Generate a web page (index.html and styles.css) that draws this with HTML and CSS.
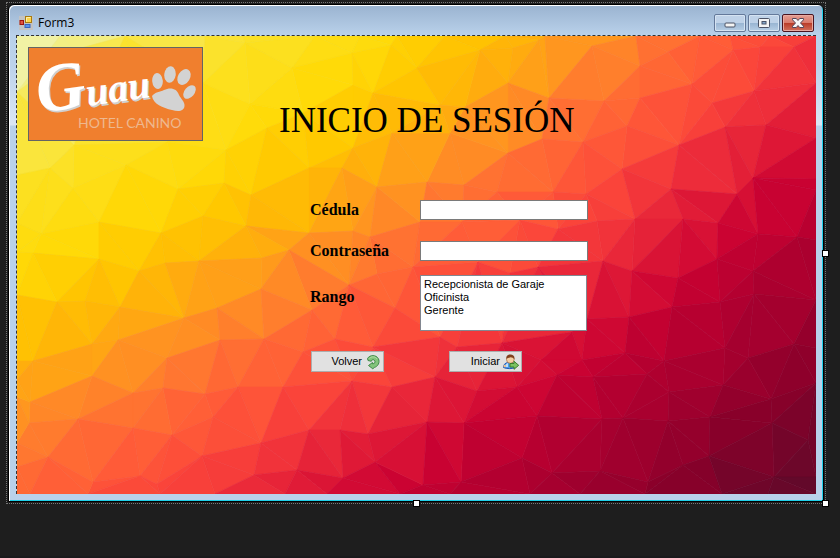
FILE: index.html
```html
<!DOCTYPE html>
<html lang="es">
<head>
<meta charset="utf-8">
<title>Form3</title>
<link rel="stylesheet" href="styles.css">
</head>
<body>
<div class="designer">
  <main class="window">
    <header class="titlebar">
      <svg class="form-icon" viewBox="0 0 14 14" aria-hidden="true">
        <rect width="14" height="14" fill="#c3c3c3"/>
        <rect x="6.5" y=".5" width="6" height="6" fill="#ffd54a" stroke="#a87b10"/>
        <path d="M7.500 5.500V1.500h4" fill="none" stroke="#fff0a8"/>
        <rect x="1" y="4.500" width="3.500" height="4" fill="#e2543e" stroke="#9c1410"/>
        <rect x="6" y="8.500" width="5" height="3" fill="#5c94ee" stroke="#3565c0"/>
      </svg>
      <h2 class="caption">Form3</h2>
      <div class="window-buttons">
        <button class="wbtn" type="button" aria-label="Minimizar"><svg viewBox="0 0 12 10"><rect x="1" y="5" width="10" height="4" rx="1" fill="#f4f4f4" stroke="#4b5265"/></svg></button>
        <button class="wbtn" type="button" aria-label="Maximizar"><svg viewBox="0 0 12 10"><rect x=".5" y=".5" width="11" height="9" rx="1" fill="#f4f4f4" stroke="#4b5265"/><rect x="4" y="3.500" width="4" height="2.500" fill="#83a7cc" stroke="#4b5265"/></svg></button>
        <button class="wbtn wbtn-close" type="button" aria-label="Cerrar"><svg viewBox="0 0 12 10"><path d="M.5.5h3.800L6 2.500 7.700.5h3.800v1.300L8.500 5l3 3.200v1.300H7.700L6 7.500 4.300 9.500H.5V8.200l3-3.200-3-3.200z" fill="#f6f6f6" stroke="#55475a"/></svg></button>
      </div>
    </header>
    <section class="client">
      <svg class="backdrop" viewBox="17 36 799 458" preserveAspectRatio="none" aria-hidden="true"></svg>
      <div class="top">
        <div class="logo">
          <div class="brand"><span class="brand-initial">G</span>uau</div>
          <div class="tagline">HOTEL CANINO</div>
          <svg class="paw" viewBox="0 0 44 46" aria-hidden="true">
            <g fill="#d3d3d3">
              <ellipse cx="5.500" cy="15" rx="5.300" ry="8" transform="rotate(-5 5.500 15)"/>
              <ellipse cx="18" cy="8.500" rx="5.700" ry="8.300" transform="rotate(7 18 8.500)"/>
              <ellipse cx="32" cy="11" rx="6" ry="8.500" transform="rotate(30 32 11)"/>
              <ellipse cx="37.500" cy="26" rx="5" ry="7.700" transform="rotate(40 37.500 26)"/>
              <path d="M0 30C3 26 8 26 12 24 18 21 25 22 27 29 29 33 33 36 32.500 40 32 45 27 46 20 44 11 42 1 38 0 30z"/>
            </g>
          </svg>
        </div>
        <h1 class="title">INICIO DE SESIÓN</h1>
      </div>
      <form class="login">
        <label for="cedula">Cédula</label>
        <input id="cedula" type="text">
        <label for="clave">Contraseña</label>
        <input id="clave" type="password">
        <label class="list-label" for="rango">Rango</label>
        <select id="rango" size="4">
          <option>Recepcionista de Garaje</option>
          <option>Oficinista</option>
          <option>Gerente</option>
        </select>
        <div class="actions">
          <button class="action" type="button">Volver
            <svg viewBox="0 0 16 16" aria-hidden="true"><path d="M2.500 4.500C5 .5 11 .8 13.300 4.500c2 4-.5 8-4 9l-1.500 1.300-4.300-3.300L7.500 8.500v1.300c2.200 0 3-1.600 2.300-3C8.800 5 6.500 5.500 6.300 7.300L3 6.500z" fill="#83c47b" stroke="#42894a"/><path d="M4.500 4.500c2-2.500 6-2 7.500.5" fill="none" stroke="#b5e0a8"/></svg>
          </button>
          <button class="action" type="button">Iniciar
            <svg viewBox="0 0 16 16" aria-hidden="true"><path d="M.5 13.500c0-3 1.500-4.500 4.500-5h4c2.500 1 3.500 2 3.500 5-3 1.500-9 1.500-12 0z" fill="#4b9be8" stroke="#2459b5"/><path d="M3 10l2-1v4H3z" fill="#b8e0ff"/><circle cx="7.300" cy="5.500" r="3.800" fill="#f4cfa4" stroke="#a0693c" stroke-width=".7"/><path d="M3.300 5C3 1.500 5 .5 7.500.5S12 2 11.400 5.500C10.500 3.500 9 4 7.500 3.300 6 4 4.500 3.500 3.300 5z" fill="#80401c"/><circle cx="1.800" cy="12" r="1.300" fill="#f0c090"/><path d="M7 9.500h4V7.300l4.700 4-4.700 4V13H7z" fill="#7ac261" stroke="#3c7d2c"/></svg>
          </button>
        </div>
      </form>
    </section>
  </main>
  <i class="handle handle-right"></i>
  <i class="handle handle-bottom"></i>
  <i class="handle handle-corner"></i>
</div>
<script src="backdrop.js"></script>
</body>
</html>
```
FILE: styles.css
```css
* { box-sizing: border-box; }

body {
  margin: 0;
  min-height: 100vh;
  padding: 2px 14px 0 6px;
  background: #1e1e1e;
  border-bottom: 2px solid #1a1a1c;
  color: #000;
  font: 11px/13px "Liberation Sans", sans-serif;
}

.designer {
  position: relative;
  border: 1px dotted #777;
  padding: 1px;
}

.window {
  border: 1px solid #000;
  border-radius: 6px 6px 0 0;
  box-shadow: inset 1px 1px #fff, inset -1px -1px #20cfe8;
  padding: 1px 7px 7px;
  background: linear-gradient(#9ab3d0, #b9d1ea 30px, #bcd2eb 60px, #dbe6f4 120px, #b9d1ea 121px);
}

.titlebar {
  display: flex;
  align-items: center;
  height: 29px;
  padding: 5px 2px 0 3px;
}

.form-icon { width: 14px; height: 14px; }

.caption {
  flex: 1;
  margin: 0 0 0 5px;
  font: 12px/16px "Open Sans", sans-serif;
}

.window-buttons { display: flex; gap: 2px; }

.wbtn {
  display: grid;
  place-items: center;
  width: 32px;
  height: 18px;
  padding: 0;
  border: 1px solid #64799a;
  border-radius: 2px;
  box-shadow: inset 0 0 0 1px #d5e3f2;
  background: linear-gradient(#bfd2e8 50%, #98b4d2 50%, #b7cfe6);
}

.wbtn svg { width: 12px; height: 10px; }

.wbtn-close {
  border-color: #4a1420;
  box-shadow: inset 0 0 0 1px #e9aaa0;
  background: linear-gradient(#e59d92, #d9796a 50%, #b93a26 50%, #d2705c);
}

.client {
  position: relative;
  isolation: isolate;
  border: 1px dashed #333;
  border-width: 1px 0 0 1px;
  padding: 11px 11px 122px;
}

.backdrop {
  position: absolute;
  inset: 0;
  z-index: -1;
  width: 100%;
  height: 100%;
}

.top { display: flex; align-items: flex-end; gap: 76px; }

.logo {
  position: relative;
  width: 175px;
  height: 94px;
  border: 1px solid #646464;
  background: #f07f2e;
}

.brand {
  position: absolute;
  left: 7px;
  top: 0;
  color: #fff;
  font: italic bold 40px/68px "Liberation Serif", serif;
  text-shadow: 1px 2px #d0d0d0;
  transform: rotate(-8deg);
}

.brand-initial { font-size: 68px; }

.tagline {
  position: absolute;
  left: 49px;
  bottom: 9px;
  color: #eeb88f;
  font: 14px/16px Lato, sans-serif;
}

.paw {
  position: absolute;
  left: 123px;
  top: 18px;
  width: 44px;
  height: 46px;
}

.title {
  margin: 0;
  font: 35px/40px "Liberation Serif", serif;
}

.login {
  display: grid;
  grid-template-columns: 110px 168px;
  grid-template-rows: 41px 34px 56px auto;
  align-items: start;
  margin: 59px 0 0 282px;
}

.login label { font: bold 16px/20px "Liberation Serif", serif; }

.login .list-label { padding-top: 12px; }

.login input {
  width: 168px;
  height: 20px;
  border: 1px solid #7a7a7a;
  padding: 1px 3px;
  background: #fff;
  font: inherit;
}

.login select {
  width: 167px;
  height: 56px;
  border: 1px solid #828790;
  border-radius: 0;
  padding: 2px 1px;
  background: #fff;
  font: inherit;
  overflow: hidden;
}

.login option { min-height: 13px; padding: 0 2px; color: #000; }

.actions {
  grid-column: 1 / -1;
  display: flex;
  gap: 65px;
  padding: 20px 0 0 1px;
}

.action {
  display: flex;
  align-items: center;
  justify-content: flex-end;
  gap: 3px;
  width: 73px;
  height: 21px;
  border: 1px solid #adadad;
  padding: 0 2px;
  background: #e1e1e1;
  color: #000;
  font: inherit;
}

.action svg { width: 16px; height: 16px; }

.handle {
  position: absolute;
  width: 7px;
  height: 7px;
  border: 1px solid #000;
  background: #fff;
}

.handle-right { right: -4px; top: 50%; margin-top: -3px; }
.handle-bottom { left: 50%; bottom: -4px; margin-left: -3px; }
.handle-corner { right: -4px; bottom: -4px; }
```
FILE: backdrop.js
```js
// Low-poly backdrop: vertices are triangulated and each facet is tinted
// by its place along a curved yellow-to-crimson ramp.
const vertices = `
17,36 60,36 125,36 205,36 243,36 315,36 360,36 397,36 445,36 505,36 545,36 636,36 700,36 730,36 770,36 816,36
74,50 17,92 245,43 292,68 352,53 391,45 417,68 353,85 373,93 250,104 203,83 303,113 267,128 226,150 167,142
126,165 74,145 50,168 17,175 73,188 178,189 224,183 251,195 309,168 342,168 353,148 392,133 377,187 41,234
99,222 161,233 203,216 246,226 309,233 353,231 370,237 289,250 262,258 199,261 165,263 139,271 99,259 33,253
17,223 17,252 413,267 377,274 349,285 420,222 480,50 513,48 539,40 592,46 508,83 549,98 604,101 640,66 668,52
692,84 640,98 733,50 760,47 794,47 754,91 712,103 725,127 766,125 816,83 679,145 627,126 622,169 583,142
542,139 508,153 464,185 427,182 440,105 465,107 450,133 497,192 553,192 586,194 671,189 737,194 753,178
816,138 816,179 635,219 683,219 597,221 558,229 520,220 462,222 718,223 758,234 797,237 816,190 603,261
632,271 678,278 717,259 753,271 816,240 538,267 510,273 478,262 57,302 85,301 17,295 120,307 92,344 118,340
33,361 17,361 184,318 217,308 261,289 312,310 264,339 220,340 167,358 133,393 92,376 30,402 29,423 78,419
163,388 205,394 238,387 283,387 303,352 335,339 373,347 395,308 352,381 392,387 213,417 172,435 133,428
48,457 93,482 140,476 157,484 202,456 261,443 309,430 340,430 368,434 375,462 343,478 297,470 254,475
17,380 17,397 17,443 17,467 17,494 30,494 88,494 160,494 215,494 285,494 327,494 400,494 440,337 457,347
502,343 541,360 572,332 587,319 629,317 672,307 720,302 754,294 816,300 794,344 816,348 748,358 725,348
664,361 625,353 582,360 557,375 517,387 477,391 435,377 593,377 647,374 537,416 602,419 623,418 669,392
723,385 710,417 668,421 771,399 772,423 808,440 816,383 709,456 683,465 648,482 600,471 552,473 522,458
464,423 427,422 461,482 423,485 774,477 816,477 450,494 530,494 580,494 645,494 722,494 768,494 816,494
`.trim().split(/\s+/).map(p => p.split(",").map(Number));

const ramp = [
  [46, 240, 246, 205], [75, 242, 240, 135], [120, 248, 232, 80], [190, 252, 225, 35],
  [270, 255, 218, 8], [325, 255, 200, 0], [370, 255, 180, 8], [420, 255, 152, 30],
  [470, 255, 120, 48], [530, 255, 90, 56], [580, 250, 68, 58], [620, 238, 46, 58],
  [665, 222, 24, 54], [715, 202, 2, 50], [770, 180, 0, 48], [830, 160, 0, 46],
  [890, 138, 0, 42], [950, 112, 6, 42], [1010, 92, 10, 42]
];

function circumcircle(a, b, c) {
  const [ax, ay] = vertices[a], [bx, by] = vertices[b], [cx, cy] = vertices[c];
  const d = 2 * (ax * (by - cy) + bx * (cy - ay) + cx * (ay - by));
  const a2 = ax * ax + ay * ay, b2 = bx * bx + by * by, c2 = cx * cx + cy * cy;
  const x = (a2 * (by - cy) + b2 * (cy - ay) + c2 * (ay - by)) / d;
  const y = (a2 * (cx - bx) + b2 * (ax - cx) + c2 * (bx - ax)) / d;
  return { points: [a, b, c], x, y, r: (ax - x) ** 2 + (ay - y) ** 2 };
}

function triangulate() {
  const n = vertices.length;
  vertices.push([-20013, -18007], [21011, -19003], [407, 32009]);
  let triangles = [circumcircle(n, n + 1, n + 2)];
  for (let i = 0; i < n; i++) {
    const [px, py] = vertices[i];
    const edges = new Map();
    triangles = triangles.filter(t => {
      if ((px - t.x) ** 2 + (py - t.y) ** 2 >= t.r) return true;
      const [a, b, c] = t.points;
      for (const e of [[a, b], [b, c], [c, a]]) {
        const key = Math.min(...e) + "-" + Math.max(...e);
        if (edges.has(key)) edges.delete(key); else edges.set(key, e);
      }
      return false;
    });
    for (const [a, b] of edges.values()) {
      const [ax, ay] = vertices[a], [bx, by] = vertices[b];
      if ((bx - ax) * (py - ay) !== (by - ay) * (px - ax)) triangles.push(circumcircle(a, b, i));
    }
  }
  return triangles.filter(t => t.points.every(p => p < n));
}

function tint(x, y, seed) {
  const across = x - 0.62 * y - 100;
  const noise = Math.sin(seed * 12.9898) * 43758.5453;
  const t = 0.62 * x + y - 18 + across * across * 0.00016 + (noise - Math.floor(noise) - 0.5) * 18;
  let i = 1;
  while (i < ramp.length - 1 && ramp[i][0] < t) i++;
  const [lo, hi] = [ramp[i - 1], ramp[i]];
  const k = Math.max(0, Math.min(1, (t - lo[0]) / (hi[0] - lo[0])));
  return "rgb(" + [1, 2, 3].map(c => Math.round(lo[c] + (hi[c] - lo[c]) * k)).join(",") + ")";
}

const svg = document.querySelector(".backdrop");
for (const t of triangulate()) {
  const corners = t.points.map(p => vertices[p]);
  const x = corners.reduce((s, c) => s + c[0], 0) / 3;
  const y = corners.reduce((s, c) => s + c[1], 0) / 3;
  const facet = document.createElementNS("http://www.w3.org/2000/svg", "polygon");
  const color = tint(x, y, x + y * 3);
  facet.setAttribute("points", corners.join(" "));
  facet.setAttribute("fill", color);
  facet.setAttribute("stroke", color);
  facet.setAttribute("stroke-width", "0.6");
  svg.append(facet);
}
```
